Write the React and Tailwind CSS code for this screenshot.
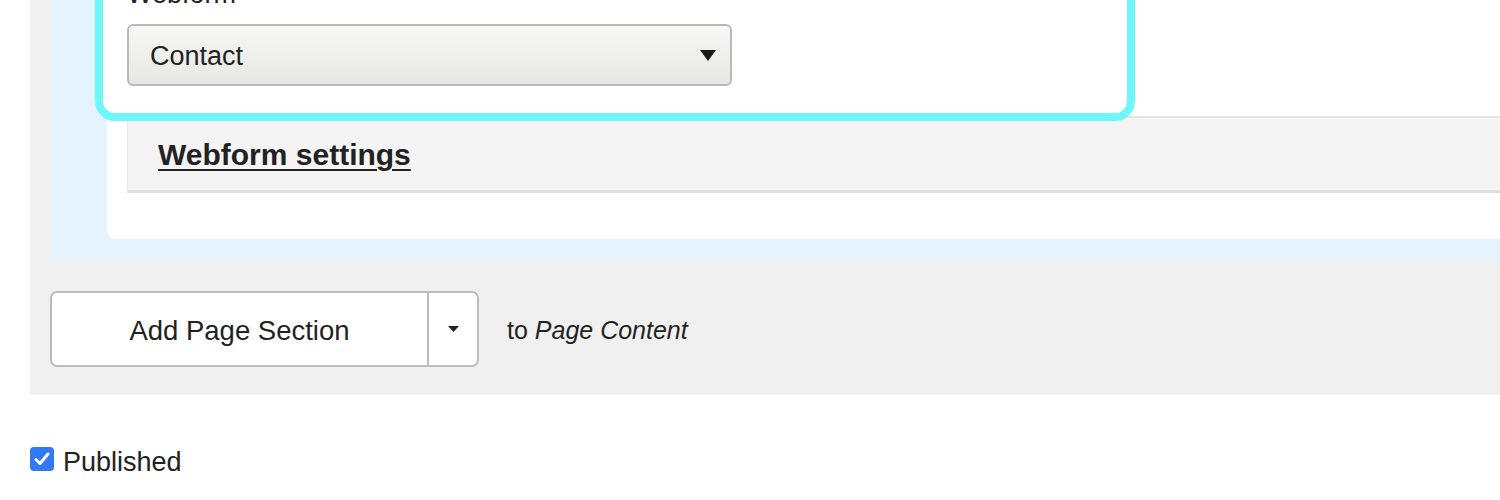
// App.jsx
export default function App() {
  return (
    <div className="min-h-screen bg-white overflow-hidden font-['Liberation_Sans',Arial,sans-serif] text-[#222]">
      {/* Page content region */}
      <div className="ml-[30px] bg-[#f0f0f0] pb-[28px]">
        <div className="ml-[20px] bg-[#e5f3fc] pb-[22px]">
          <div className="ml-[57px] bg-white rounded-bl-[8px] pb-[46px]">
            {/* Highlighted field */}
            <div className="relative z-10 -mt-[40px] -ml-[12px] w-[1040px] border-[8px] border-[#6ff6fb] rounded-[20px] bg-white pt-[11px] pb-[27px] pl-[24px]">
              <div className="text-[27px] leading-[31px]">Webform</div>
              <div className="mt-[14px] w-[605px] h-[62px] flex items-center justify-between rounded-[6px] border-2 border-[#b9b9b9] bg-gradient-to-b from-[#f7f7f5] to-[#e7e7e3] pl-[21px] pr-[14px]">
                <span className="text-[27px] leading-none pt-[3px]">Contact</span>
                <svg width="16" height="11" viewBox="0 0 16 11">
                  <path d="M0 0 H16 L8 11 Z" fill="#1a1a1a" />
                </svg>
              </div>
            </div>

            {/* Collapsible settings */}
            <div className="-mt-[5px] ml-[20px] h-[77px] flex items-center bg-[#f4f4f4] border-t-2 border-b-[3px] border-l border-t-[#e4e4e4] border-b-[#dfdfdf] border-l-[#e9e9e9] pl-[30px]">
              <a className="text-[30px] font-bold underline decoration-2 underline-offset-[4px] text-[#222] leading-none pt-[2px]">
                Webform settings
              </a>
            </div>
          </div>
        </div>

        {/* Add section row */}
        <div className="pt-[30px] pl-[20px] flex items-center">
          <div className="flex h-[76px] rounded-[7px] border-2 border-[#bcbcbc] bg-white">
            <button className="w-[375px] flex items-center justify-center text-[27.5px] text-[#222] pt-[3px]">
              Add Page Section
            </button>
            <div className="w-[2px] bg-[#bcbcbc]" />
            <button className="w-[48px] flex items-center justify-center">
              <svg width="11" height="6" viewBox="0 0 11 6">
                <path d="M0 0 H11 L5.5 6 Z" fill="#222" />
              </svg>
            </button>
          </div>
          <span className="ml-[28px] text-[25px] pt-[4px]">
            to <em>Page Content</em>
          </span>
        </div>
      </div>

      {/* Publish toggle */}
      <label className="mt-[47px] ml-[30px] flex items-center gap-[9px]">
        <span className="w-[24px] h-[24px] rounded-[4px] bg-[#3279f5] flex items-center justify-center">
          <svg width="16" height="14" viewBox="0 0 16 14">
            <path d="M2 7.5 L6 11.5 L14 2" fill="none" stroke="white" strokeWidth="3" strokeLinecap="round" strokeLinejoin="round" />
          </svg>
        </span>
        <span className="text-[27px] leading-none pt-[7px]">Published</span>
      </label>
    </div>
  );
}
